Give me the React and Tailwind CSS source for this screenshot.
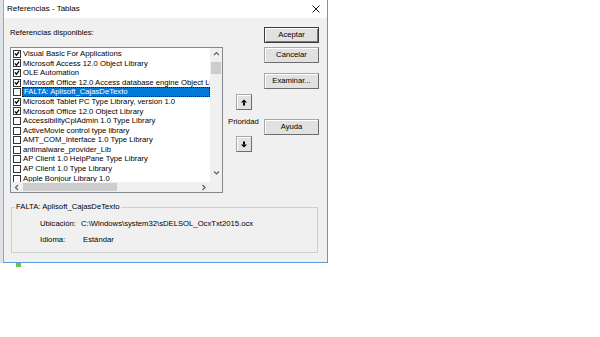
import React from 'react';

const REFS = [
  { name: 'Visual Basic For Applications', checked: true },
  { name: 'Microsoft Access 12.0 Object Library', checked: true },
  { name: 'OLE Automation', checked: true },
  { name: 'Microsoft Office 12.0 Access database engine Object Library', checked: true },
  { name: 'FALTA: Aplisoft_CajasDeTexto', checked: false, selected: true },
  { name: 'Microsoft Tablet PC Type Library, version 1.0', checked: true },
  { name: 'Microsoft Office 12.0 Object Library', checked: true },
  { name: 'AccessibilityCplAdmin 1.0 Type Library', checked: false },
  { name: 'ActiveMovie control type library', checked: false },
  { name: 'AMT_COM_Interface 1.0 Type Library', checked: false },
  { name: 'antimalware_provider_Lib', checked: false },
  { name: 'AP Client 1.0 HelpPane Type Library', checked: false },
  { name: 'AP Client 1.0 Type Library', checked: false },
  { name: 'Apple Bonjour Library 1.0', checked: false },
];

function CheckBox({ checked }) {
  return (
    <span className="flex h-[8px] w-[8px] shrink-0 items-center justify-center border border-[#333] bg-white">
      {checked && (
        <svg width="7" height="7" viewBox="0 0 7 7">
          <path d="M1 3.4 L2.8 5.4 L6 1.2" fill="none" stroke="#000" strokeWidth="1.5" />
        </svg>
      )}
    </span>
  );
}

function Chevron({ dir }) {
  const d = {
    up: 'M1 4 L3.5 1.5 L6 4',
    down: 'M1 1.5 L3.5 4 L6 1.5',
    left: 'M4 1 L1.5 3.5 L4 6',
    right: 'M1.5 1 L4 3.5 L1.5 6',
  }[dir];
  const vertical = dir === 'up' || dir === 'down';
  return (
    <svg
      width={vertical ? 7 : 6}
      height={vertical ? 6 : 7}
      viewBox={vertical ? '0 0 7 6' : '0 0 6 7'}
    >
      <path d={d} fill="none" stroke="#606060" strokeWidth="1.2" />
    </svg>
  );
}

function MoveArrow({ dir }) {
  return (
    <svg width="6" height="7" viewBox="0 0 6 7">
      {dir === 'up' ? (
        <>
          <polygon points="3,0.5 6,3.5 0,3.5" fill="#000" />
          <rect x="2" y="3.5" width="2" height="3" fill="#000" />
        </>
      ) : (
        <>
          <rect x="2" y="0.5" width="2" height="3" fill="#000" />
          <polygon points="0,3.5 6,3.5 3,6.5" fill="#000" />
        </>
      )}
    </svg>
  );
}

function DlgButton({ children, primary, className = '' }) {
  return (
    <div
      className={`flex items-center justify-center bg-[#e1e1e1] ${
        primary
          ? 'border border-[#3a3a3a] shadow-[inset_1px_1px_0_#fff,inset_-1px_-1px_0_#7a7a7a]'
          : 'border border-[#a8a8a8] border-r-[#6d6d6d] border-b-[#6d6d6d] shadow-[inset_1px_1px_0_#fff]'
      } ${className}`}
    >
      {children}
    </div>
  );
}

export default function App() {
  return (
    <div className="h-[337px] w-[600px] overflow-hidden bg-white font-['Liberation_Sans',Arial,sans-serif] text-[7.7px] leading-none text-black">
      <div className="flex">
        <div className="h-[263px] w-[3px] bg-[#dfe3e8]" />

        <div className="flex h-[263px] w-[325px] flex-col border-l border-r border-b border-l-[#9aa5b1] border-r-[#5b9bd5] border-b-[#5b9bd5]">
          {/* title bar */}
          <div className="flex h-[18px] items-center justify-between bg-white pl-[3px] pr-[7px]">
            <span className="text-[8px]">Referencias - Tablas</span>
            <svg width="8" height="8" viewBox="0 0 8 8">
              <path d="M0.5 0.5 L7.5 7.5 M7.5 0.5 L0.5 7.5" stroke="#000" strokeWidth="0.9" />
            </svg>
          </div>

          {/* body */}
          <div className="flex flex-1 flex-col bg-[#f0f0f0]">
            <div className="flex pl-[6px]">
              <div className="w-[213px]">
                <div className="mt-[10px] flex h-[10px] items-center">
                  Referencias disponibles:
                </div>

                <div className="mt-[9px] flex h-[146px] flex-col border border-[#828790] bg-white">
                  <div className="flex h-[134px]">
                    <div className="flex-1 overflow-hidden pt-[1px]">
                      {REFS.map((ref) => (
                        <div key={ref.name} className="flex h-[9.6px] items-center pl-[2px]">
                          <CheckBox checked={ref.checked} />
                          <span
                            className={`ml-[1px] flex h-full flex-1 items-center overflow-hidden whitespace-nowrap pl-[1px] ${
                              ref.selected
                                ? 'border border-dotted border-[#1d1d1d] bg-[#0078d7] text-white'
                                : ''
                            }`}
                          >
                            {ref.name}
                          </span>
                        </div>
                      ))}
                    </div>

                    <div className="flex w-[12px] flex-col bg-[#f0f0f0]">
                      <div className="flex h-[12px] items-center justify-center">
                        <Chevron dir="up" />
                      </div>
                      <div className="mx-[1px] mt-[2px] h-[12px] bg-[#cdcdcd]" />
                      <div className="flex-1" />
                      <div className="mb-[3px] flex h-[12px] items-center justify-center">
                        <Chevron dir="down" />
                      </div>
                    </div>
                  </div>

                  <div className="flex h-[10px]">
                    <div className="flex w-[198px] bg-[#f0f0f0]">
                      <div className="flex w-[11px] items-center justify-center">
                        <Chevron dir="left" />
                      </div>
                      <div className="my-[1px] ml-[1px] w-[94px] bg-[#cdcdcd]" />
                      <div className="flex-1" />
                      <div className="flex w-[11px] items-center justify-center">
                        <Chevron dir="right" />
                      </div>
                    </div>
                    <div className="flex-1 bg-[#f0f0f0]" />
                  </div>
                </div>
              </div>

              {/* priority */}
              <div className="ml-[5px] flex w-[31px] flex-col items-center pt-[76px]">
                <DlgButton className="h-[16px] w-[16px]">
                  <MoveArrow dir="up" />
                </DlgButton>
                <div className="mt-[7px] flex h-[10px] items-center">Prioridad</div>
                <DlgButton className="mt-[9px] h-[16px] w-[16px]">
                  <MoveArrow dir="down" />
                </DlgButton>
              </div>

              {/* buttons */}
              <div className="ml-[5px] flex w-[55px] flex-col pt-[9px]">
                <DlgButton primary className="h-[16px]">Aceptar</DlgButton>
                <DlgButton className="mt-[4px] h-[16px]">Cancelar</DlgButton>
                <DlgButton className="mt-[10px] h-[16px]">Examinar...</DlgButton>
                <DlgButton className="mt-[30px] h-[16px]">Ayuda</DlgButton>
              </div>
            </div>

            <fieldset className="ml-[7px] mt-[9px] h-[51px] w-[307px] border border-[#cfcfcf] px-0">
              <legend className="ml-[3px] px-[1px] leading-[10px]">
                FALTA: Aplisoft_CajasDeTexto
              </legend>
              <div className="mt-[7px] flex h-[10px] items-center pl-[28px]">
                <span className="w-[41px]">Ubicación:</span>
                <span>C:\Windows\system32\sDELSOL_OcxTxt2015.ocx</span>
              </div>
              <div className="mt-[6px] flex h-[10px] items-center pl-[28px]">
                <span className="w-[43px]">Idioma:</span>
                <span>Estándar</span>
              </div>
            </fieldset>
          </div>
        </div>
      </div>

      <div className="ml-[16px] h-[4px] w-[5px] bg-[#6cbf5a]" />
    </div>
  );
}
